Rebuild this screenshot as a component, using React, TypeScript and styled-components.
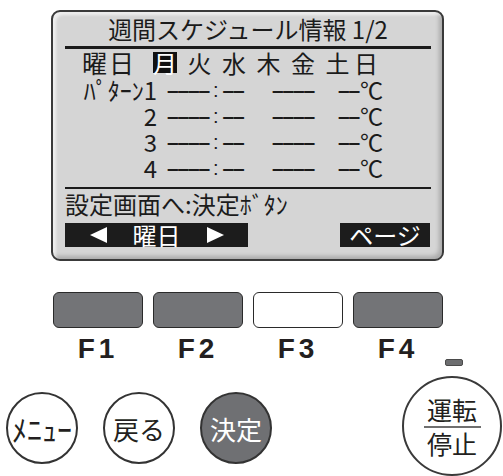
import React from "react";
import styled, { createGlobalStyle } from "styled-components";

const GlobalStyle = createGlobalStyle`
  html, body { margin: 0; padding: 0; background: #ffffff; overflow: hidden; }
  body { font-family: "Noto Sans CJK JP", "Noto Sans", sans-serif; color: #1d1d1d; }
`;

const Page = styled.div`
  width: 503px;
  height: 476px;
  display: flex;
  flex-direction: column;
  overflow: hidden;
`;

const Screen = styled.div`
  box-sizing: border-box;
  margin: 10px 0 0 51px;
  width: 393px;
  height: 252px;
  border: 2px solid #3a3a3a;
  border-radius: 9px;
  background: #d5d5d5;
  box-shadow: inset 3px 3px 3px rgba(255, 255, 255, 0.6),
    inset -3px -3px 4px rgba(0, 0, 0, 0.2);
  padding: 0 11px 0 12px;
  display: flex;
  flex-direction: column;
  color: #1b1b1b;
`;

const Title = styled.div`
  height: 34px;
  line-height: 34px;
  text-align: center;
  font-size: 24px;
  white-space: nowrap;
  border-bottom: 3px solid #1b1b1b;
`;

const DayRow = styled.div`
  height: 26px;
  display: flex;
  align-items: center;
  padding-left: 17px;
  font-size: 24px;
`;

const DayLabel = styled.span`
  width: 71px;
  font-size: 25px;
  letter-spacing: 2px;
  line-height: 26px;
`;

const DayList = styled.div`
  display: flex;
  align-items: center;
  gap: 10.5px;
`;

const Day = styled.span<{ $active?: boolean; $shift?: number }>`
  width: 24px;
  height: 21px;
  line-height: 21px;
  text-align: center;
  background: ${(p) => (p.$active ? "#111111" : "transparent")};
  color: ${(p) => (p.$active ? "#ffffff" : "#1b1b1b")};
  margin-left: ${(p) => p.$shift ?? 0}px;
`;

const Rows = styled.div`
  margin-top: 2px;
  display: flex;
  flex-direction: column;
`;

const Row = styled.div`
  height: 26px;
  line-height: 26px;
  display: grid;
  grid-template-columns: 102px 105px 66px auto;
  align-items: center;
  font-size: 24px;
  white-space: nowrap;
`;

const RowLabel = styled.span`
  text-align: right;
  padding-right: 10px;
`;

const Cell = styled.span`
  display: flex;
  align-items: center;
`;

const Dash = styled.span`
  font-family: "Liberation Sans", Arial, sans-serif;
  font-weight: 700;
  font-size: 21px;
  letter-spacing: -1.2px;
`;

const Colon = styled.span`
  font-family: "Liberation Sans", Arial, sans-serif;
  font-size: 20px;
  margin: 0 4px 0 4px;
`;

const Unit = styled.span`
  font-size: 24px;
  letter-spacing: -1px;
  margin-left: 1px;
`;

const Separator = styled.div`
  margin-top: 6px;
  border-top: 2px solid #1b1b1b;
`;

const Message = styled.div`
  height: 30px;
  line-height: 30px;
  font-size: 24px;
  white-space: nowrap;
`;

const SoftKeys = styled.div`
  margin-top: 4px;
  display: flex;
  justify-content: space-between;
  padding-right: 1px;
`;

const SoftKey = styled.div<{ $w: number }>`
  width: ${(p) => p.$w}px;
  height: 24px;
  background: #1c1c1c;
  color: #ffffff;
  display: flex;
  align-items: center;
  justify-content: center;
  gap: 26px;
  font-size: 24px;
  line-height: 24px;
  white-space: nowrap;
`;

const FKeysRow = styled.div`
  margin: 31px 0 0 53px;
  display: flex;
  gap: 10px;
`;

const FKey = styled.div`
  width: 90px;
  display: flex;
  flex-direction: column;
  align-items: center;
`;

const FButton = styled.div<{ $light?: boolean }>`
  box-sizing: border-box;
  width: 90px;
  height: 36px;
  border: 1.5px solid #2a2a2a;
  border-radius: 6px;
  background: ${(p) => (p.$light ? "#ffffff" : "#737477")};
`;

const FLabel = styled.div`
  margin-top: 11px;
  font-family: "Liberation Sans", Arial, sans-serif;
  font-weight: 700;
  font-size: 28px;
  line-height: 20px;
  letter-spacing: 4px;
  color: #231f20;
`;

const LowerRow = styled.div`
  display: flex;
  align-items: flex-start;
  padding-left: 6px;
`;

const Circles = styled.div`
  margin-top: 33px;
  display: flex;
  gap: 25px;
`;

const RoundKey = styled.div<{ $dark?: boolean }>`
  box-sizing: border-box;
  width: 72px;
  height: 72px;
  border-radius: 50%;
  border: 2px solid #333333;
  background: ${(p) => (p.$dark ? "#6f7073" : "#ffffff")};
  color: ${(p) => (p.$dark ? "#ffffff" : "#231f20")};
  display: flex;
  align-items: center;
  justify-content: center;
  font-size: 26px;
  white-space: nowrap;
`;

const MenuText = styled.span`
  font-size: 30px;
`;

const PowerColumn = styled.div`
  margin-left: 130px;
  display: flex;
  flex-direction: column;
`;

const Led = styled.div`
  box-sizing: border-box;
  margin-left: 43px;
  width: 18px;
  height: 7px;
  background: #6d6e70;
  border: 1px solid #4a4a4a;
  border-radius: 2px;
`;

const PowerKey = styled.div`
  box-sizing: border-box;
  margin-top: 10px;
  width: 100px;
  height: 100px;
  border-radius: 50%;
  border: 2px solid #3a3a3a;
  background: #ffffff;
  display: flex;
  flex-direction: column;
  align-items: center;
  justify-content: center;
  color: #231f20;
`;

const PowerText = styled.div<{ $gap?: number }>`
  font-size: 25px;
  line-height: 24px;
  margin-top: ${(p) => p.$gap ?? 0}px;
  white-space: nowrap;
`;

const PowerDivider = styled.div`
  margin-top: 5px;
  width: 57px;
  height: 2px;
  background: #6f6f6f;
`;

const Triangle = ({ dir }: { dir: "left" | "right" }) => (
  <svg width="17" height="16" viewBox="0 0 17 16">
    <polygon
      points={dir === "left" ? "0,8 17,0 17,16" : "0,0 17,8 0,16"}
      fill="#ffffff"
    />
  </svg>
);

const days = ["月", "火", "水", "木", "金", "土", "日"];
const patterns = ["ﾊﾟﾀｰﾝ1", "2", "3", "4"];

export default function App() {
  return (
    <>
      <GlobalStyle />
      <Page>
        <Screen>
          <Title>週間スケジュール情報 1/2</Title>
          <DayRow>
            <DayLabel>曜日</DayLabel>
            <DayList>
              {days.map((d, i) => (
                <Day key={d} $active={i === 0} $shift={i === 6 ? -6 : 0}>
                  {d}
                </Day>
              ))}
            </DayList>
          </DayRow>
          <Rows>
            {patterns.map((p) => (
              <Row key={p}>
                <RowLabel>{p}</RowLabel>
                <Cell>
                  <Dash>––––</Dash>
                  <Colon>:</Colon>
                  <Dash>––</Dash>
                </Cell>
                <Cell>
                  <Dash>––––</Dash>
                </Cell>
                <Cell>
                  <Dash>––</Dash>
                  <Unit>°C</Unit>
                </Cell>
              </Row>
            ))}
          </Rows>
          <Separator />
          <Message>設定画面へ:決定ﾎﾞﾀﾝ</Message>
          <SoftKeys>
            <SoftKey $w={183}>
              <Triangle dir="left" />
              <span>曜日</span>
              <Triangle dir="right" />
            </SoftKey>
            <SoftKey $w={90}>ページ</SoftKey>
          </SoftKeys>
        </Screen>
        <FKeysRow>
          {["F1", "F2", "F3", "F4"].map((f) => (
            <FKey key={f}>
              <FButton $light={f === "F3"} />
              <FLabel>{f}</FLabel>
            </FKey>
          ))}
        </FKeysRow>
        <LowerRow>
          <Circles>
            <RoundKey>
              <MenuText>ﾒﾆｭｰ</MenuText>
            </RoundKey>
            <RoundKey>戻る</RoundKey>
            <RoundKey $dark>決定</RoundKey>
          </Circles>
          <PowerColumn>
            <Led />
            <PowerKey>
              <PowerText>運転</PowerText>
              <PowerDivider />
              <PowerText $gap={3}>停止</PowerText>
            </PowerKey>
          </PowerColumn>
        </LowerRow>
      </Page>
    </>
  );
}
